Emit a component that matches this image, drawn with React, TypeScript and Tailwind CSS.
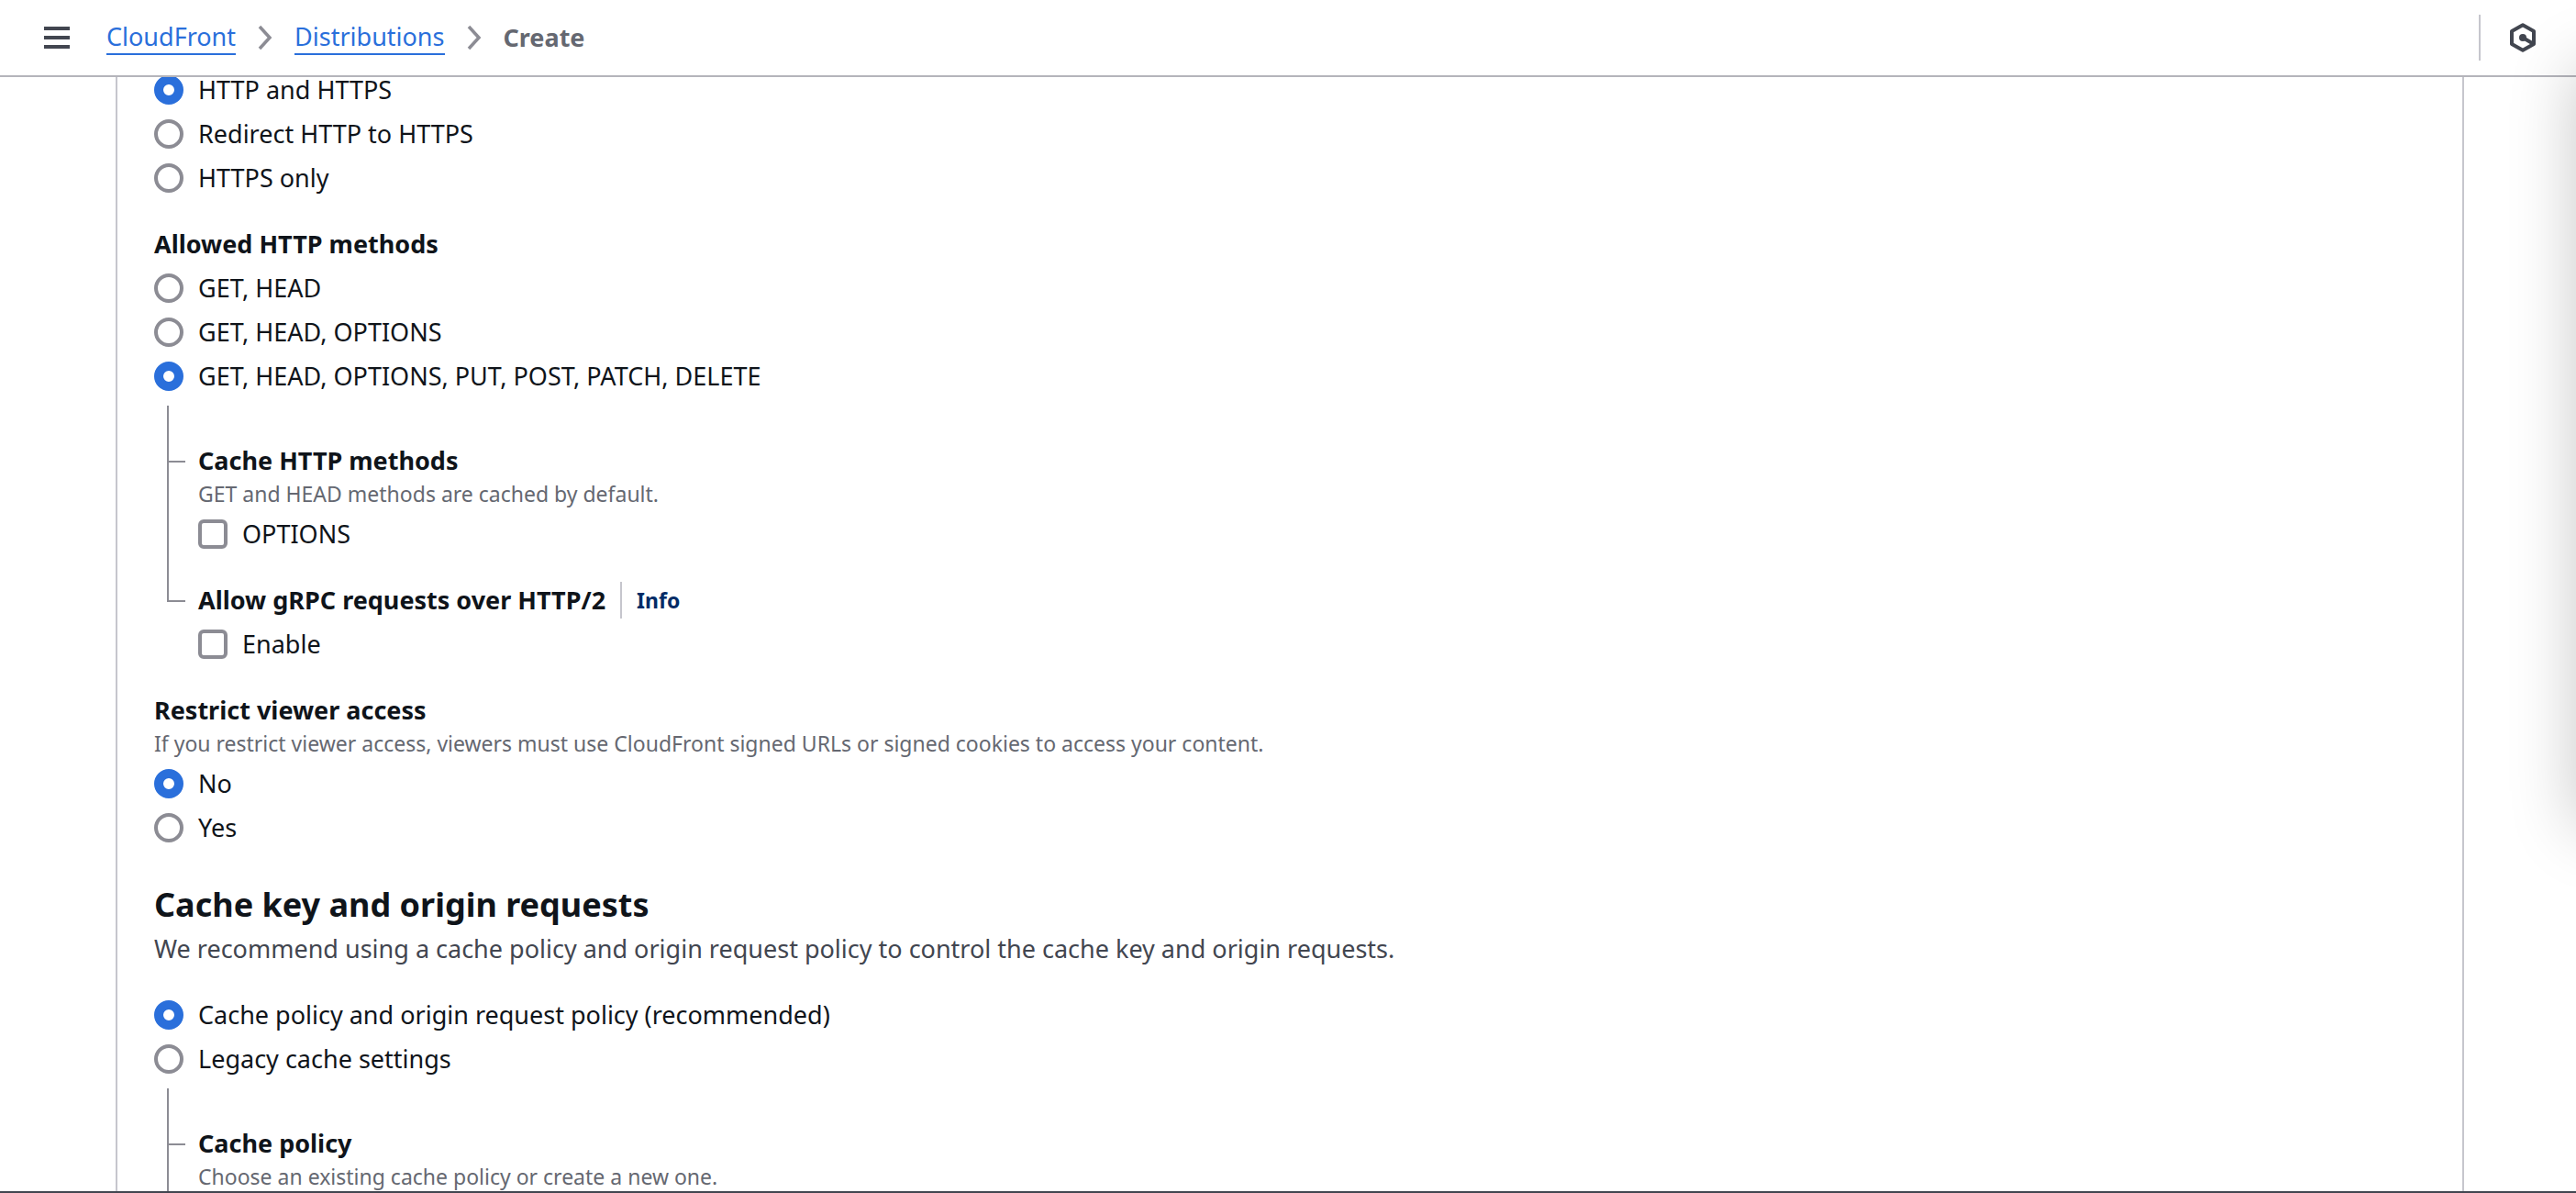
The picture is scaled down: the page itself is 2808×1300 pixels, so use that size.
import React from "react";

type ChoiceProps = {
  type: "radio" | "checkbox";
  name: string;
  label: string;
  checked?: boolean;
};

const Choice = ({ type, name, label, checked }: ChoiceProps) => {
  const shape =
    type === "radio"
      ? "rounded-full checked:border-[10px] checked:border-[#2a6fdb]"
      : "rounded-md checked:bg-[#2a6fdb] checked:border-[#2a6fdb]";
  return (
    <label className="flex w-fit items-center gap-4">
      <input
        type={type}
        name={name}
        defaultChecked={checked}
        className={`size-8 shrink-0 appearance-none border-4 border-[#8c8c94] bg-white ${shape}`}
      />
      <span>{label}</span>
    </label>
  );
};

type FieldProps = {
  label: string;
  description?: string;
  info?: boolean;
  children?: React.ReactNode;
};

const Field = ({ label, description, info, children }: FieldProps) => {
  return (
    <fieldset>
      <legend className="flex items-center font-bold">
        {label}
        {info && (
          <a
            href="#info"
            className="ml-4 border-l-2 border-[#c6c6cd] pl-4 text-[23px] leading-10 text-[#002b66]"
          >
            Info
          </a>
        )}
      </legend>
      {description && (
        <p className="text-[23px] leading-8 text-[#656871]">{description}</p>
      )}
      <div className="mt-2 flex flex-col gap-2">{children}</div>
    </fieldset>
  );
};

// fields nested under a radio group, hung on a vertical line
const Tree = ({ children }: { children: React.ReactNode }) => {
  return (
    <div className="mt-3">
      <div className="ml-3.5 h-2 border-l-2 border-[#8c8c94]" />
      <ul>{children}</ul>
    </div>
  );
};

const Branch = ({ last, children }: { last?: boolean; children: React.ReactNode }) => {
  return (
    <li className="flex">
      <div className="flex w-12 shrink-0 flex-col pl-3.5">
        <div className="h-[54px] w-5 border-b-2 border-l-2 border-[#8c8c94]" />
        {!last && <div className="flex-1 border-l-2 border-[#8c8c94]" />}
      </div>
      <div className="pt-8">{children}</div>
    </li>
  );
};

const Chevron = () => {
  return (
    <svg viewBox="0 0 16 28" className="h-7 w-4" fill="none" stroke="#8c8c94" strokeWidth="3.5">
      <path d="M2 2l11 12L2 26" />
    </svg>
  );
};

const Header = () => {
  return (
    <header className="z-10 flex shrink-0 items-center border-b-2 border-[#b4b4bb] bg-white pr-11 pl-12 text-[#656871]">
      <button type="button" aria-label="Open navigation">
        <svg viewBox="0 0 28 24" className="h-6 w-7" fill="#424650">
          <path d="M0 0h28v4H0zM0 10h28v4H0zM0 20h28v4H0z" />
        </svg>
      </button>
      <nav aria-label="Breadcrumbs" className="ml-10 flex items-center gap-6">
        <a href="#cloudfront" className="border-b-2 border-[#2a6fdb] leading-9 text-[#2a6fdb]">
          CloudFront
        </a>
        <Chevron />
        <a href="#distributions" className="border-b-2 border-[#2a6fdb] leading-9 text-[#2a6fdb]">
          Distributions
        </a>
        <Chevron />
        <span className="font-bold">Create</span>
      </nav>
      <div className="my-4 ml-auto h-[50px] w-0.5 bg-[#c6c6cd]" />
      <button type="button" aria-label="Amazon Q" className="ml-8">
        <svg viewBox="0 0 28 32" className="h-8 w-7" fill="none" stroke="#424650" strokeWidth="4">
          <path d="M14 2.3L26 9v14L14 29.7L2 23V9z" strokeLinejoin="round" />
          <path d="M14 16l11 6.5" />
          <circle cx="14" cy="16" r="4" fill="#424650" stroke="none" />
        </svg>
      </button>
    </header>
  );
};

export default function App() {
  return (
    <div className="relative flex h-screen flex-col overflow-hidden border-b-2 border-[#424650] bg-white font-['Noto_Sans','Open_Sans',sans-serif] text-[27px] leading-10 text-[#0f141a]">
      <Header />
      <main className="min-h-0 flex-1 overflow-hidden pr-[122px] pl-[126px]">
        <div className="-mt-1.5 border-x-2 border-[#c6c6cd] px-10">
          <div role="radiogroup" aria-label="Viewer protocol policy" className="flex flex-col gap-2">
            <Choice type="radio" name="protocol" label="HTTP and HTTPS" checked />
            <Choice type="radio" name="protocol" label="Redirect HTTP to HTTPS" />
            <Choice type="radio" name="protocol" label="HTTPS only" />
          </div>

          <div className="mt-8">
            <Field label="Allowed HTTP methods">
              <Choice type="radio" name="methods" label="GET, HEAD" />
              <Choice type="radio" name="methods" label="GET, HEAD, OPTIONS" />
              <Choice
                type="radio"
                name="methods"
                label="GET, HEAD, OPTIONS, PUT, POST, PATCH, DELETE"
                checked
              />
            </Field>
          </div>

          <Tree>
            <Branch>
              <Field
                label="Cache HTTP methods"
                description="GET and HEAD methods are cached by default."
              >
                <Choice type="checkbox" name="cache-options" label="OPTIONS" />
              </Field>
            </Branch>
            <Branch last>
              <Field label="Allow gRPC requests over HTTP/2" info>
                <Choice type="checkbox" name="grpc" label="Enable" />
              </Field>
            </Branch>
          </Tree>

          <div className="mt-8">
            <Field
              label="Restrict viewer access"
              description="If you restrict viewer access, viewers must use CloudFront signed URLs or signed cookies to access your content."
            >
              <Choice type="radio" name="restrict" label="No" checked />
              <Choice type="radio" name="restrict" label="Yes" />
            </Field>
          </div>

          <h2 className="mt-10 text-4xl leading-12 font-bold">Cache key and origin requests</h2>
          <p className="mt-1 text-[#424650]">
            We recommend using a cache policy and origin request policy to control the cache key and
            origin requests.
          </p>

          <div role="radiogroup" aria-label="Cache settings" className="mt-8 flex flex-col gap-2">
            <Choice
              type="radio"
              name="cache"
              label="Cache policy and origin request policy (recommended)"
              checked
            />
            <Choice type="radio" name="cache" label="Legacy cache settings" />
          </div>
          <Tree>
            <Branch>
              <Field
                label="Cache policy"
                description="Choose an existing cache policy or create a new one."
              />
            </Branch>
          </Tree>
        </div>
      </main>
      {/* shadow of the closed help panel, which sits past the right edge */}
      <div className="pointer-events-none absolute top-18 left-full z-20 h-[830px] w-40 shadow-[0_0_72px_rgba(0,0,0,0.22)]" />
    </div>
  );
}
